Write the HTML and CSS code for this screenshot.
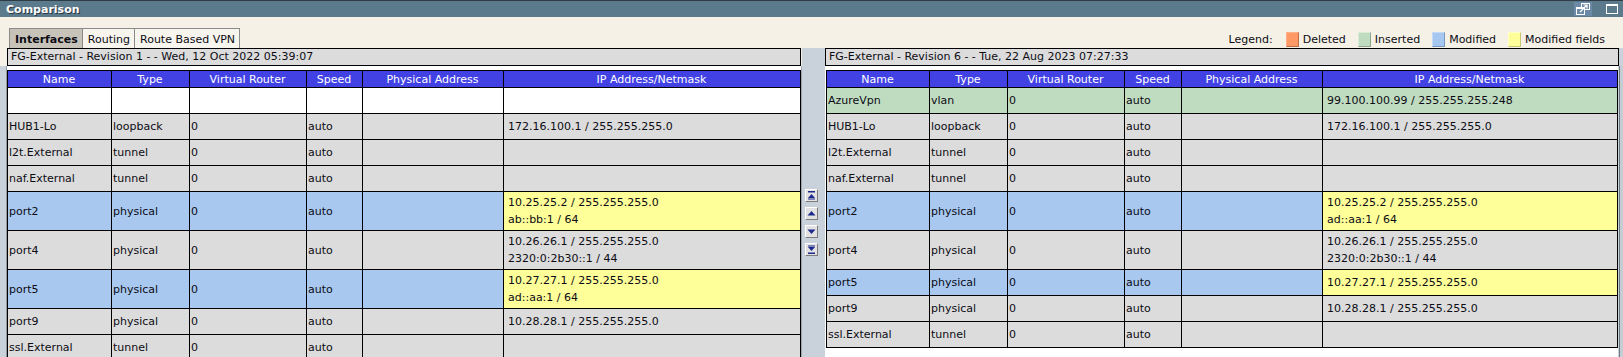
FILE: index.html
```html
<!DOCTYPE html>
<html>
<head>
<meta charset="utf-8">
<link rel="stylesheet" href="styles.css">
</head>
<body>
<div class="titlebar">
  <span class="title">Comparison</span>
  <div class="winbtns">
    <span class="winbtn popout">
      <svg width="18" height="14" viewBox="0 0 18 14">
        <rect x="7.5" y="1.5" width="8" height="6" fill="none" stroke="#fff"/>
        <rect x="2" y="5" width="9" height="8" fill="#fff"/>
        <rect x="3" y="7" width="7" height="5" fill="#6a8aa8"/>
        <path d="M6 10 L13 3 M9.5 3 H13 V6.5" fill="none" stroke="#fff" stroke-width="1.2"/>
      </svg>
    </span>
    <span class="winbtn maxbtn">
      <svg width="12" height="10" viewBox="0 0 12 10">
        <rect x="0.5" y="0.5" width="11" height="9" fill="none" stroke="#fff"/>
        <rect x="0" y="0" width="12" height="2" fill="#fff"/>
      </svg>
    </span>
  </div>
</div>
<div class="toolbar">
  <div class="tabs">
    <span class="tab active">Interfaces</span>
    <span class="tab">Routing</span>
    <span class="tab">Route Based VPN</span>
  </div>
  <div class="legend">
    <span class="leg-label">Legend:</span>
    <span class="sw sw-del"></span><span class="leg-text">Deleted</span>
    <span class="sw sw-ins"></span><span class="leg-text">Inserted</span>
    <span class="sw sw-mod"></span><span class="leg-text">Modified</span>
    <span class="sw sw-fld"></span><span class="leg-text">Modified fields</span>
  </div>
</div>
<div class="main">
  <div class="pane pane-left">
    <div class="head-row"><div class="rev">FG-External - Revision 1 - - Wed, 12 Oct 2022 05:39:07</div></div>
    <div class="scroll">
      <table class="cmp left">
        <thead>
          <tr><th class="c1">Name</th><th class="c2">Type</th><th class="c3">Virtual Router</th><th class="c4">Speed</th><th class="c5">Physical Address</th><th class="c6">IP Address/Netmask</th></tr>
        </thead>
        <tbody>
          <tr class="r1 blank"><td></td><td></td><td></td><td></td><td></td><td class="ip"></td></tr>
          <tr class="r1"><td>HUB1-Lo</td><td>loopback</td><td>0</td><td>auto</td><td></td><td class="ip">172.16.100.1 / 255.255.255.0</td></tr>
          <tr class="r1"><td>l2t.External</td><td>tunnel</td><td>0</td><td>auto</td><td></td><td class="ip"></td></tr>
          <tr class="r1"><td>naf.External</td><td>tunnel</td><td>0</td><td>auto</td><td></td><td class="ip"></td></tr>
          <tr class="r2 mod"><td>port2</td><td>physical</td><td>0</td><td>auto</td><td></td><td class="ip fld">10.25.25.2 / 255.255.255.0<br>ab::bb:1 / 64</td></tr>
          <tr class="r2"><td>port4</td><td>physical</td><td>0</td><td>auto</td><td></td><td class="ip">10.26.26.1 / 255.255.255.0<br>2320:0:2b30::1 / 44</td></tr>
          <tr class="r2 mod"><td>port5</td><td>physical</td><td>0</td><td>auto</td><td></td><td class="ip fld">10.27.27.1 / 255.255.255.0<br>ad::aa:1 / 64</td></tr>
          <tr class="r1"><td>port9</td><td>physical</td><td>0</td><td>auto</td><td></td><td class="ip">10.28.28.1 / 255.255.255.0</td></tr>
          <tr class="r1"><td>ssl.External</td><td>tunnel</td><td>0</td><td>auto</td><td></td><td class="ip"></td></tr>
        </tbody>
      </table>
    </div>
  </div>
  <div class="mid">
    <span class="sbtn"><svg width="11" height="11" viewBox="0 0 11 11"><rect x="2" y="1" width="7" height="1.5" fill="#1c2a8c"/><path d="M5.5 4 L9 8 H2 Z" fill="#1c2a8c"/><rect x="2" y="8.5" width="7" height="1" fill="#1c2a8c"/></svg></span>
    <span class="sbtn"><svg width="11" height="11" viewBox="0 0 11 11"><path d="M5.5 3 L9.5 7.5 H1.5 Z" fill="#1c2a8c"/></svg></span>
    <span class="sbtn"><svg width="11" height="11" viewBox="0 0 11 11"><path d="M5.5 8 L9.5 3.5 H1.5 Z" fill="#1c2a8c"/></svg></span>
    <span class="sbtn"><svg width="11" height="11" viewBox="0 0 11 11"><rect x="2" y="1.5" width="7" height="1" fill="#1c2a8c"/><path d="M5.5 7 L9 3 H2 Z" fill="#1c2a8c"/><rect x="2" y="8.5" width="7" height="1.5" fill="#1c2a8c"/></svg></span>
  </div>
  <div class="pane pane-right">
    <div class="head-row"><div class="rev">FG-External - Revision 6 - - Tue, 22 Aug 2023 07:27:33</div></div>
    <div class="scroll">
      <table class="cmp right">
        <thead>
          <tr><th class="c1">Name</th><th class="c2">Type</th><th class="c3">Virtual Router</th><th class="c4">Speed</th><th class="c5">Physical Address</th><th class="c6">IP Address/Netmask</th></tr>
        </thead>
        <tbody>
          <tr class="r1 ins"><td>AzureVpn</td><td>vlan</td><td>0</td><td>auto</td><td></td><td class="ip">99.100.100.99 / 255.255.255.248</td></tr>
          <tr class="r1"><td>HUB1-Lo</td><td>loopback</td><td>0</td><td>auto</td><td></td><td class="ip">172.16.100.1 / 255.255.255.0</td></tr>
          <tr class="r1"><td>l2t.External</td><td>tunnel</td><td>0</td><td>auto</td><td></td><td class="ip"></td></tr>
          <tr class="r1"><td>naf.External</td><td>tunnel</td><td>0</td><td>auto</td><td></td><td class="ip"></td></tr>
          <tr class="r2 mod"><td>port2</td><td>physical</td><td>0</td><td>auto</td><td></td><td class="ip fld">10.25.25.2 / 255.255.255.0<br>ad::aa:1 / 64</td></tr>
          <tr class="r2"><td>port4</td><td>physical</td><td>0</td><td>auto</td><td></td><td class="ip">10.26.26.1 / 255.255.255.0<br>2320:0:2b30::1 / 44</td></tr>
          <tr class="r1 mod"><td>port5</td><td>physical</td><td>0</td><td>auto</td><td></td><td class="ip fld">10.27.27.1 / 255.255.255.0</td></tr>
          <tr class="r1"><td>port9</td><td>physical</td><td>0</td><td>auto</td><td></td><td class="ip">10.28.28.1 / 255.255.255.0</td></tr>
          <tr class="r1"><td>ssl.External</td><td>tunnel</td><td>0</td><td>auto</td><td></td><td class="ip"></td></tr>
        </tbody>
      </table>
    </div>
  </div>
  <div class="edge"></div>
</div>
</body>
</html>
```
FILE: styles.css
```css
html, body {
  margin: 0;
  padding: 0;
}
body {
  width: 1623px;
  height: 357px;
  overflow: hidden;
  background: #c9d2da;
  font-family: "DejaVu Sans", Verdana, sans-serif;
  font-size: 11px;
  color: #0c0c14;
}

/* title bar */
.titlebar {
  height: 17px;
  box-sizing: border-box;
  border-top: 1px solid #2e3c46;
  background: #5b7a8b;
  display: flex;
  align-items: center;
  justify-content: space-between;
  padding-left: 6px;
  padding-right: 5px;
}
.title {
  color: #fff;
  font-weight: bold;
  font-size: 11px;
  text-shadow: 1px 1px 0 #2a3842;
}
.winbtns {
  display: flex;
  align-items: center;
  gap: 14px;
}
.winbtn {
  display: flex;
  align-items: center;
  justify-content: center;
}
.popout {
  width: 18px;
  height: 14px;
  background: #6a8aa8;
}
.maxbtn {
  width: 12px;
  height: 10px;
}

/* toolbar */
.toolbar {
  height: 31px;
  background: #f5f1e6;
  display: flex;
  justify-content: space-between;
  align-items: flex-end;
}
.tabs {
  display: flex;
  margin-left: 9px;
}
.tab {
  height: 20px;
  box-sizing: border-box;
  border: 1px solid #8a8a8a;
  border-bottom: none;
  padding: 1px 4px 0 5px;
  display: flex;
  align-items: center;
  background: #f8f5ee;
}
.tab + .tab {
  border-left: none;
}
.tab.active {
  background: #c7c3b9;
  font-weight: bold;
}
.legend {
  display: flex;
  align-items: center;
  margin-right: 18px;
  margin-bottom: 1px;
  height: 16px;
}
.sw {
  width: 13px;
  height: 15px;
  box-sizing: border-box;
  margin-left: 13px;
  margin-right: 4px;
  border: 1px solid;
}
.sw-del { background: #ff9966; border-color: #ffb088 #c07048 #c07048 #ffb088; }
.sw-ins { background: #c0dcc0; border-color: #d8ecd8 #90a890 #90a890 #d8ecd8; }
.sw-mod { background: #a6c8f0; border-color: #c4dcf8 #7898c0 #7898c0 #c4dcf8; }
.sw-fld { background: #ffff99; border-color: #ffffc8 #c8c870 #c8c870 #ffffc8; }
.leg-text + .sw { margin-left: 12px; }

/* main area */
.main {
  height: 309px;
  display: flex;
  align-items: stretch;
}
.pane {
  display: flex;
  flex-direction: column;
}
.pane-left {
  width: 802px;
}
.pane-left .head-row {
  background: #f5f1e6;
  padding-left: 7px;
}
.rev {
  width: 794px;
  height: 18px;
  box-sizing: border-box;
  border: 1px solid #000;
  background: #dcdcdc;
  padding-left: 3px;
  line-height: 16px;
  white-space: nowrap;
}
.scroll {
  flex: 1;
  background: #ffffff;
  padding-top: 4px;
  overflow: hidden;
}
.pane-left .scroll {
  margin-left: 6px;
  border-left: 1px solid #8c99a4;
  border-right: 1px solid #9aa6b0;
}
.mid {
  width: 23px;
  box-sizing: border-box;
  padding-left: 3px;
  padding-top: 141px;
  display: flex;
  flex-direction: column;
  gap: 5px;
}
.sbtn {
  width: 13px;
  height: 13px;
  box-sizing: border-box;
  border: 1px solid;
  border-color: #ffffff #7c7c7c #7c7c7c #ffffff;
  background: #e2e2e2;
  display: block;
}
.sbtn svg {
  display: block;
}
.pane-right {
  width: 794px;
}
.pane-right .scroll {
  width: 793px;
  box-sizing: border-box;
  padding-left: 1px;
}
.edge {
  flex: 1;
  border-left: 1px solid #6e7880;
  background: #c4ccd4;
  margin-top: 18px;
}

/* tables */
table.cmp {
  border-collapse: separate;
  border-spacing: 0;
  table-layout: fixed;
  border-top: 1px solid #000;
  border-left: 1px solid #000;
}
table.left { width: 794px; }
table.right { width: 792px; }
.cmp th, .cmp td {
  box-sizing: border-box;
  border-right: 1px solid #000;
  border-bottom: 1px solid #000;
  padding: 0 2px 0 1px;
  white-space: nowrap;
  overflow: hidden;
}
.cmp th {
  height: 17px;
  background: #4242e4;
  color: #fff;
  font-weight: normal;
  text-align: center;
  line-height: 15px;
}
.cmp td {
  background: #dcdcdc;
  line-height: 17px;
  vertical-align: middle;
  text-align: left;
}
.cmp td.ip {
  padding-left: 4px;
}
.cmp tr.r1 td { height: 26px; }
.cmp tr.r2 td { height: 39px; }
.cmp tr.blank td { background: #ffffff; }
.cmp tr.mod td { background: #a8c8f0; }
.cmp tr.ins td { background: #c0dcc0; }
.cmp tr td.fld { background: #ffff99; }

.left .c1 { width: 104px; }
.left .c2 { width: 78px; }
.left .c3 { width: 117px; }
.left .c4 { width: 56px; }
.left .c5 { width: 141px; }
.left .c6 { width: 297px; }
.right .c1 { width: 103px; }
.right .c2 { width: 78px; }
.right .c3 { width: 117px; }
.right .c4 { width: 57px; }
.right .c5 { width: 141px; }
.right .c6 { width: 295px; }
```
